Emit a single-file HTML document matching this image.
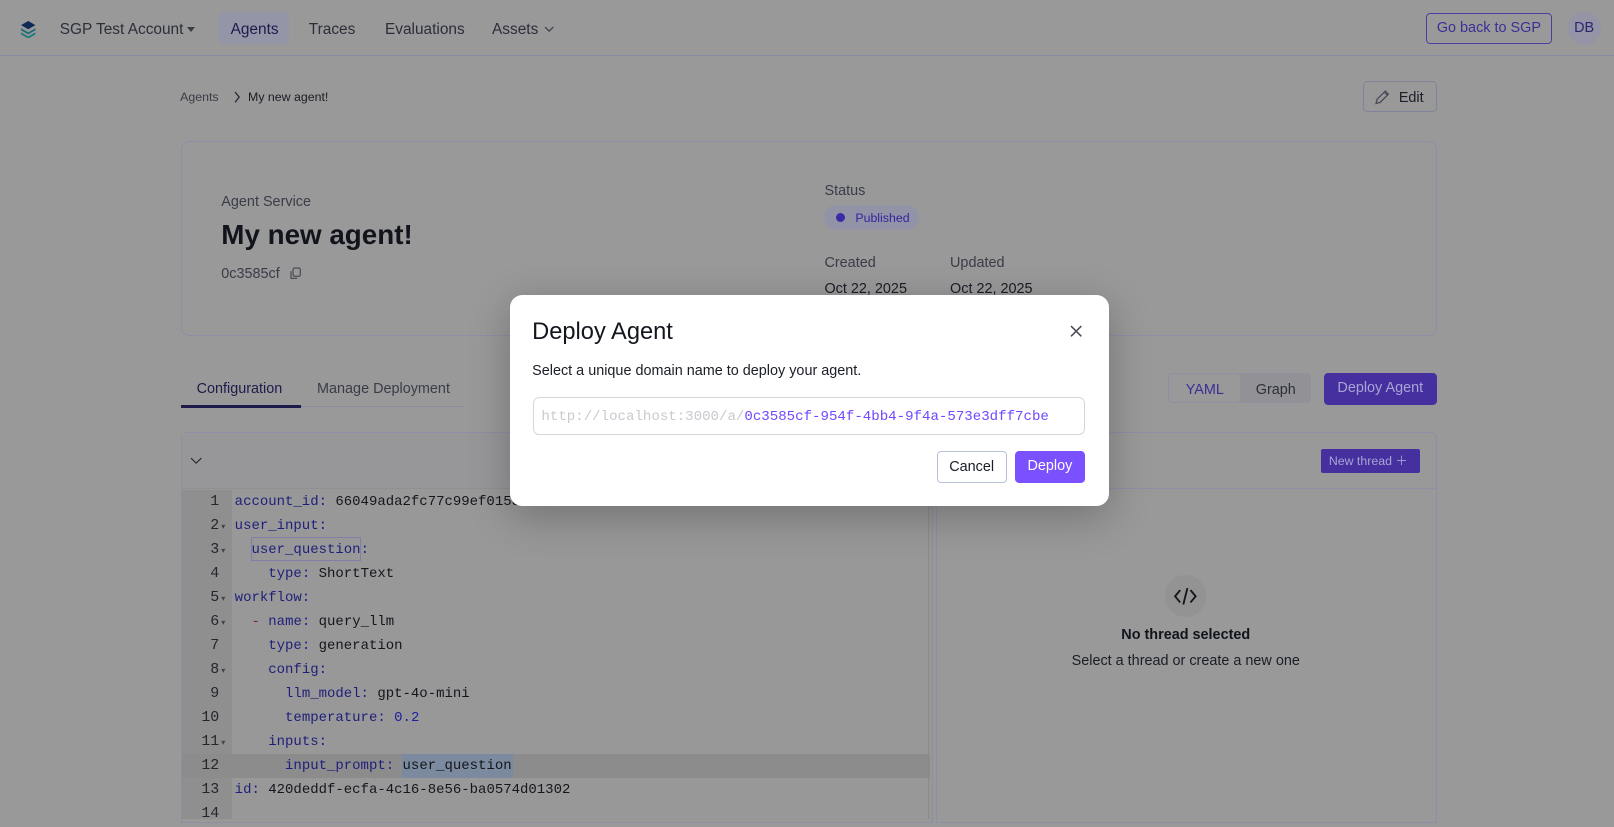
<!DOCTYPE html>
<html><head><meta charset="utf-8">
<style>
html{zoom:1.0293}
*{box-sizing:border-box;margin:0;padding:0}
body{width:1568px;height:793px;overflow:hidden;background:#999;font-family:"Liberation Sans",sans-serif;color:#1b1d27;position:relative}
.a{position:absolute;white-space:nowrap}
.mono{font-family:"Liberation Mono","DejaVu Sans Mono",monospace}
.k{color:#1e1f7a}
</style></head><body>
<!-- nav -->
<div class="a" style="left:0;top:0;width:1568px;height:54px;border-bottom:1px solid #878ba3"></div>
<svg class="a" style="left:19px;top:19px" width="16" height="18" viewBox="0 0 16 18"><path d="M8 1 L15 5 L8 9 L1 5Z" fill="#102a55"/><path d="M1 8 L8 12 L15 8 L15 10 L8 14 L1 10Z" fill="#1b6b78"/><path d="M1 12 L8 16 L15 12 L15 14 L8 18 L1 14Z" fill="#167a7a"/></svg>
<div class="a" style="left:58px;top:20px;font-size:15px;color:#2c2e3a">SGP Test Account</div>
<div class="a" style="left:182px;top:26px;width:0;height:0;border-left:4px solid transparent;border-right:4px solid transparent;border-top:5px solid #3a3c48"></div>
<div class="a" style="left:212px;top:12px;width:69px;height:31px;background:#9595a8;border-radius:4px"></div>
<div class="a" style="left:224px;top:20px;font-size:15px;color:#1e1b4b">Agents</div>
<div class="a" style="left:300px;top:20px;font-size:15px;color:#2c2e3a">Traces</div>
<div class="a" style="left:374px;top:20px;font-size:15px;color:#2c2e3a">Evaluations</div>
<div class="a" style="left:478px;top:20px;font-size:15px;color:#2c2e3a">Assets</div>
<svg class="a" style="left:529px;top:24px" width="10" height="8"><path d="M1 2 L5 6 L9 2" stroke="#3a3c48" fill="none" stroke-width="1.2"/></svg>
<div class="a" style="left:1385px;top:13px;width:123px;height:30px;border:1px solid #4a3f9e;border-radius:4px;font-size:14px;color:#3a2f96;text-align:center;line-height:29px">Go back to SGP</div>
<div class="a" style="left:1523px;top:12px;width:32px;height:32px;border-radius:50%;background:#9494a6;font-size:14px;color:#2a2670;text-align:center;line-height:32px">DB</div>
<!-- breadcrumb -->
<div class="a" style="left:175px;top:87px;font-size:12px;color:#3a3c48">Agents</div>
<svg class="a" style="left:226px;top:88px" width="8" height="12"><path d="M2 1 L6 6 L2 11" stroke="#2c2e3a" fill="none" stroke-width="1.3"/></svg>
<div class="a" style="left:241px;top:87px;font-size:12px;color:#1b1d27">My new agent!</div>
<div class="a" style="left:1324px;top:79px;width:72px;height:30px;border:1px solid #80849a;border-radius:4px"></div>
<svg class="a" style="left:1335px;top:86px" width="16" height="16" viewBox="0 0 16 16"><path d="M2 14 L3 10 L11 2 L14 5 L6 13Z M10 3 L13 6" stroke="#4a4c58" fill="none" stroke-width="1.3"/></svg>
<div class="a" style="left:1359px;top:87px;font-size:14px;color:#1b1d27">Edit</div>
<!-- card -->
<div class="a" style="left:176px;top:137px;width:1220px;height:189px;border:1px solid #8c8fa5;border-radius:8px"></div>
<div class="a" style="left:215px;top:188px;font-size:14px;color:#3a3c48">Agent Service</div>
<div class="a" style="left:215px;top:213px;font-size:27px;font-weight:bold;color:#12141c">My new agent!</div>
<div class="a" style="left:215px;top:258px;font-size:14px;color:#3a3c48">0c3585cf</div>
<svg class="a" style="left:282px;top:259px" width="11" height="13"><rect x="3" y="1" width="7" height="8" rx="1.5" stroke="#4a4c58" fill="none" stroke-width="1.2"/><path d="M1 4 V11 H7" stroke="#4a4c58" fill="none" stroke-width="1.2"/></svg>
<div class="a" style="left:801px;top:178px;font-size:14px;color:#3a3c48">Status</div>
<div class="a" style="left:801px;top:199px;width:92px;height:24px;border-radius:12px;background:#9393a8"></div>
<div class="a" style="left:812px;top:207px;width:9px;height:9px;border-radius:50%;background:#3b2aa8"></div>
<div class="a" style="left:831px;top:205px;font-size:12px;color:#3226a0">Published</div>
<div class="a" style="left:801px;top:248px;font-size:14px;color:#3a3c48">Created</div>
<div class="a" style="left:801px;top:273px;font-size:14px;color:#1b1d27">Oct 22, 2025</div>
<div class="a" style="left:923px;top:248px;font-size:14px;color:#3a3c48">Updated</div>
<div class="a" style="left:923px;top:273px;font-size:14px;color:#1b1d27">Oct 22, 2025</div>
<!-- tabs -->
<div class="a" style="left:191px;top:370px;font-size:14px;color:#1e1b4b">Configuration</div>
<div class="a" style="left:308px;top:370px;font-size:14px;color:#3a3c48">Manage Deployment</div>
<div class="a" style="left:176px;top:394px;width:275px;height:1px;background:#888ca2"></div>
<div class="a" style="left:176px;top:393px;width:116px;height:3px;background:#1e1b4b"></div>
<div class="a" style="left:1135px;top:362px;width:139px;height:30px;border:1px solid #8e91a4;border-radius:4px;background:#929296"></div>
<div class="a" style="left:1136px;top:363px;width:69px;height:28px;background:#999;border-radius:3px"></div>
<div class="a" style="left:1152px;top:371px;font-size:14px;color:#3a2f96">YAML</div>
<div class="a" style="left:1220px;top:371px;font-size:14px;color:#2c2e3a">Graph</div>
<div class="a" style="left:1286px;top:362px;width:110px;height:31px;background:#4630a0;border-radius:4px;font-size:14px;color:#aaa4d4;text-align:center;line-height:31px">Deploy Agent</div>
<!-- code panel -->
<div class="a" style="left:176px;top:420px;width:730px;height:380px;border:1px solid #8c8fa5;border-radius:6px 6px 0 0;background:#989898"></div>
<div class="a" style="left:177px;top:421px;width:728px;height:54px;background:#979799;border-bottom:1px solid #8f8f95"></div>
<svg class="a" style="left:185px;top:444px" width="12" height="8"><path d="M1 1 L6 6 L11 1" stroke="#2c2e3a" fill="none" stroke-width="1.2"/></svg>
<div class="a" style="left:177px;top:476px;width:48px;height:320px;background:#8f8f8f"></div>
<div class="a" style="left:177px;top:733px;width:727px;height:23px;background:#8c8c8c"></div>
<div class="a" style="left:391px;top:733px;width:107px;height:23px;background:#7c8aa0"></div>
<div class="a" style="left:244px;top:522px;width:107px;height:23px;border:1px solid #7e7ea8"></div>
<div class="a" style="left:902px;top:476px;width:1px;height:320px;background:#8a8a90"></div>
<div class="a mono" style="left:177px;top:477px;width:36px;font-size:14.5px;line-height:23.3px;text-align:right;color:#24262e">1<br>2<br>3<br>4<br>5<br>6<br>7<br>8<br>9<br>10<br>11<br>12<br>13<br>14</div>
<div class="a" style="left:215px;top:477px;font-size:8px;line-height:23.3px;color:#444">&nbsp;<br>▾<br>▾<br>&nbsp;<br>▾<br>▾<br>&nbsp;<br>▾<br>&nbsp;<br>&nbsp;<br>▾</div>
<div class="a mono" style="left:228px;top:477px;font-size:13.6px;line-height:23.3px;color:#15161c;white-space:pre"><span class="k">account_id:</span> 66049ada2fc77c99ef0153
<span class="k">user_input:</span>
  <span class="k">user_question:</span>
    <span class="k">type:</span> ShortText
<span class="k">workflow:</span>
  <span style="color:#8a1060">-</span> <span class="k">name:</span> query_llm
    <span class="k">type:</span> generation
    <span class="k">config:</span>
      <span class="k">llm_model:</span> gpt-4o-mini
      <span class="k">temperature:</span> <span style="color:#1b1fa0">0.2</span>
    <span class="k">inputs:</span>
      <span class="k">input_prompt:</span> user_question
<span class="k">id:</span> 420deddf-ecfa-4c16-8e56-ba0574d01302</div>
<!-- right panel -->
<div class="a" style="left:909px;top:420px;width:487px;height:380px;border:1px solid #8c8fa5;border-radius:6px 6px 0 0"></div>
<div class="a" style="left:910px;top:474px;width:485px;height:1px;background:#8c8fa5"></div>
<div class="a" style="left:1283px;top:436px;width:97px;height:24px;background:#4630a0;border-radius:2px;font-size:12px;color:#aaa4d4;line-height:24px;padding-left:8px">New thread ＋</div>
<div class="a" style="left:1132px;top:559px;width:40px;height:40px;border-radius:50%;background:#939393"></div>
<svg class="a" style="left:1140px;top:569px" width="24" height="20"><path d="M7 4 L2 10 L7 16 M17 4 L22 10 L17 16 M14 2 L10 18" stroke="#15161c" fill="none" stroke-width="1.8"/></svg>
<div class="a" style="left:1000px;top:609px;width:304px;text-align:center;font-size:14px;font-weight:bold;color:#12141c">No thread selected</div>
<div class="a" style="left:1000px;top:634px;width:304px;text-align:center;font-size:14px;color:#1b1d27">Select a thread or create a new one</div>
<!-- modal -->
<div class="a" style="left:495px;top:287px;width:582px;height:205px;background:#fff;border-radius:12px;box-shadow:0 10px 40px rgba(0,0,0,.25)"></div>
<div class="a" style="left:517px;top:310px;font-size:23px;color:#14161e">Deploy Agent</div>
<svg class="a" style="left:1040px;top:316px" width="12" height="12"><path d="M1 1 L11 11 M11 1 L1 11" stroke="#4a4c58" stroke-width="1.5"/></svg>
<div class="a" style="left:517px;top:353px;font-size:14px;color:#1b1d27">Select a unique domain name to deploy your agent.</div>
<div class="a" style="left:518px;top:386px;width:536px;height:37px;border:1px solid #d4d7de;border-radius:6px"></div>
<div class="a mono" style="left:526px;top:397px;font-size:13.7px;color:#c8cad0">http://localhost:3000/a/<span style="color:#7048ff">0c3585cf-954f-4bb4-9f4a-573e3dff7cbe</span></div>
<div class="a" style="left:910px;top:438px;width:68px;height:31px;border:1px solid #b5bfd6;border-radius:4px;font-size:14px;color:#1b1d27;text-align:center;line-height:30px">Cancel</div>
<div class="a" style="left:986px;top:438px;width:68px;height:31px;background:#7a50ff;border-radius:4px;font-size:14px;color:#fff;text-align:center;line-height:31px">Deploy</div>
</body></html>
